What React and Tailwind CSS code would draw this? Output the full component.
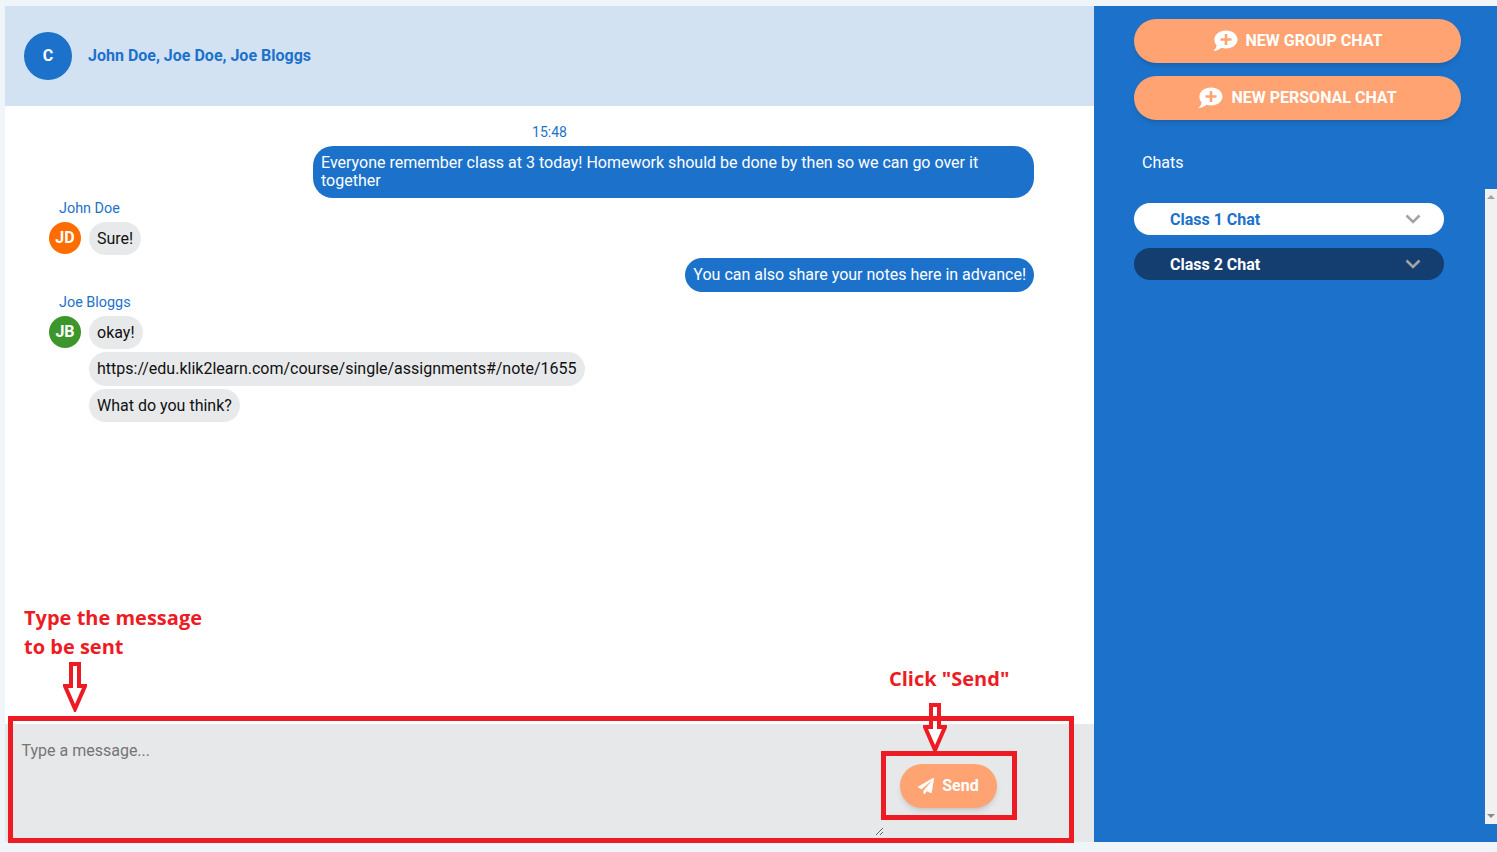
import React from 'react';
import { FaPaperPlane } from 'react-icons/fa';

function CommentPlus() {
    return (
        <svg width="25" height="22" viewBox="0 0 25 22" className="shrink-0">
            <path d="M13 0.5C19.4 0.5 24.5 4.4 24.5 9.5C24.5 14.6 19.4 18.5 13 18.5C11.4 18.5 9.9 18.3 8.5 17.8C6.3 19.8 3.5 20.9 0.3 21.2C2.1 19.6 3.3 17.6 3.7 15.6C2.2 14 1.4 11.9 1.4 9.5C1.4 4.4 6.6 0.5 13 0.5Z" fill="#fff" />
            <path d="M11.7 4H14.3V8.2H18.5V10.8H14.3V15H11.7V10.8H7.5V8.2H11.7Z" fill="#ffa372" />
        </svg>
    );
}

function Chevron() {
    return (
        <svg width="16" height="10" viewBox="0 0 16 10" className="shrink-0">
            <path d="M1.5 1.5L8 8L14.5 1.5" fill="none" stroke="#a3a3a3" strokeWidth="2.6" />
        </svg>
    );
}

function RedArrow({ className }) {
    return (
        <svg width="24" height="50" viewBox="0 0 24 50" className={className}>
            <path d="M8 2H16V24H22L12 47L2 24H8Z" fill="#fff" stroke="#ed1c24" strokeWidth="4" />
        </svg>
    );
}

function OtherBubble({ tall, children }) {
    return (
        <div className={`w-fit rounded-[17px] bg-[#e8e9eb] p-2 text-base text-[#111] ${tall ? 'leading-[18px]' : 'leading-[17px]'}`}>
            {children}
        </div>
    );
}

function MyBubble({ children }) {
    return (
        <div className="flex justify-end pr-[60px]">
            <div className="max-w-[721px] rounded-[20px] bg-[#1c72cb] p-2 text-base leading-[18px] text-white">{children}</div>
        </div>
    );
}

function Avatar({ color, children }) {
    return (
        <div className={`flex h-8 w-8 shrink-0 items-center justify-center rounded-full text-base font-bold text-white ${color}`}>
            {children}
        </div>
    );
}

function SideButton({ children }) {
    return (
        <button className="flex h-11 w-[327px] items-center justify-center gap-2 rounded-full bg-[#ffa372] text-base font-bold text-white shadow-md">
            <CommentPlus />
            {children}
        </button>
    );
}

function ChatPill({ dark, children }) {
    return (
        <div className={`flex h-8 w-[310px] items-center justify-between rounded-full pl-9 pr-[23px] text-base font-bold ${dark ? 'bg-[#133e6f] text-white' : 'bg-white text-[#1c72cb]'}`}>
            <span className="pt-[1px]">{children}</span>
            <Chevron />
        </div>
    );
}

export default function App() {
    return (
        <div className="relative h-[852px] w-[1497px] overflow-hidden bg-[#f0f5fa] pb-[10px] pl-[5px] pt-[6px] font-['Roboto',sans-serif]">
            <div className="flex h-full">
                <main className="flex w-[1089px] flex-col bg-white">
                    <header className="flex h-[100px] shrink-0 items-center gap-4 bg-[#d2e2f3] pl-[19px]">
                        <div className="flex h-12 w-12 items-center justify-center rounded-full bg-[#1c72cb] text-base font-bold text-white">C</div>
                        <div className="text-base font-bold text-[#1c72cb]">John Doe, Joe Doe, Joe Bloggs</div>
                    </header>

                    <div className="min-h-0 flex-1 pt-[18px]">
                        <div className="text-center text-sm leading-4 text-[#1c72cb]">15:48</div>
                        <div className="mt-[6px]">
                            <MyBubble>Everyone remember class at 3 today! Homework should be done by then so we can go over it together</MyBubble>
                        </div>

                        <div className="mt-[1px] pl-[54px] text-[14.4px] leading-5 text-[#1c72cb]">John Doe</div>
                        <div className="mt-[3px] flex gap-2 pl-11">
                            <Avatar color="bg-[#ff6d00]">JD</Avatar>
                            <OtherBubble>Sure!</OtherBubble>
                        </div>

                        <div className="mt-[3px]">
                            <MyBubble>You can also share your notes here in advance!</MyBubble>
                        </div>

                        <div className="mt-[1px] pl-[54px] text-[14.4px] leading-5 text-[#1c72cb]">Joe Bloggs</div>
                        <div className="mt-[3px] flex gap-2 pl-11">
                            <Avatar color="bg-[#3c962c]">JB</Avatar>
                            <div className="flex flex-col gap-[3px]">
                                <OtherBubble>okay!</OtherBubble>
                                <OtherBubble tall>https://edu.klik2learn.com/course/single/assignments#/note/1655</OtherBubble>
                                <OtherBubble>What do you think?</OtherBubble>
                            </div>
                        </div>
                    </div>

                    <div className="flex h-[118px] shrink-0 bg-[#e7e8ea]">
                        <textarea
                            placeholder="Type a message..."
                            className="ml-[9px] mt-[13px] h-[99px] w-[870px] bg-transparent py-1 pl-[7.5px] pr-2 text-base leading-[20px] outline-none placeholder:text-[#757575]"
                        />
                        <button className="ml-4 mt-10 flex h-11 w-[97px] items-center justify-center gap-2 rounded-full bg-[#ffa372] text-base font-bold text-white shadow-md">
                            <FaPaperPlane className="text-base" />
                            Send
                        </button>
                    </div>
                </main>

                <aside className="flex w-[403px] flex-col bg-[#1c72cb] pl-10 pt-[13px]">
                    <div className="flex flex-col gap-[13px]">
                        <SideButton>NEW GROUP CHAT</SideButton>
                        <SideButton>NEW PERSONAL CHAT</SideButton>
                    </div>
                    <div className="mt-[33px] pl-2 text-base leading-[19px] text-white">Chats</div>
                    <div className="mt-[31px] flex flex-col gap-[13px]">
                        <ChatPill>Class 1 Chat</ChatPill>
                        <ChatPill dark>Class 2 Chat</ChatPill>
                    </div>
                </aside>
            </div>

            {/* page scrollbar sitting over the sidebar */}
            <div className="absolute left-[1485px] top-[189px] h-[635px] w-3 bg-[#f1f1f1]">
                <div className="absolute left-[2px] top-[6px] h-0 w-0 border-x-4 border-b-4 border-x-transparent border-b-[#a3a3a3]" />
                <div className="absolute bottom-[6px] left-[2px] h-0 w-0 border-x-4 border-t-4 border-x-transparent border-t-[#888]" />
            </div>

            {/* red tutorial annotations */}
            <div className="absolute left-6 top-[603px] font-['Open_Sans',sans-serif] text-[20px] font-bold leading-[29px] text-[#ed1c24]">
                Type the message<br />to be sent
            </div>
            <div className="absolute left-[889px] top-[664px] font-['Open_Sans',sans-serif] text-[20px] font-bold leading-[29px] text-[#ed1c24]">
                Click "Send"
            </div>
            <RedArrow className="absolute left-[63px] top-[662px]" />
            <RedArrow className="absolute left-[923px] top-[703px]" />
            <div className="pointer-events-none absolute left-2 top-[716px] h-[127px] w-[1066px] border-[5px] border-[#ed1c24]" />
            <div className="pointer-events-none absolute left-[881px] top-[751px] h-[69px] w-[136px] border-[5px] border-[#ed1c24]" />
        </div>
    );
}
